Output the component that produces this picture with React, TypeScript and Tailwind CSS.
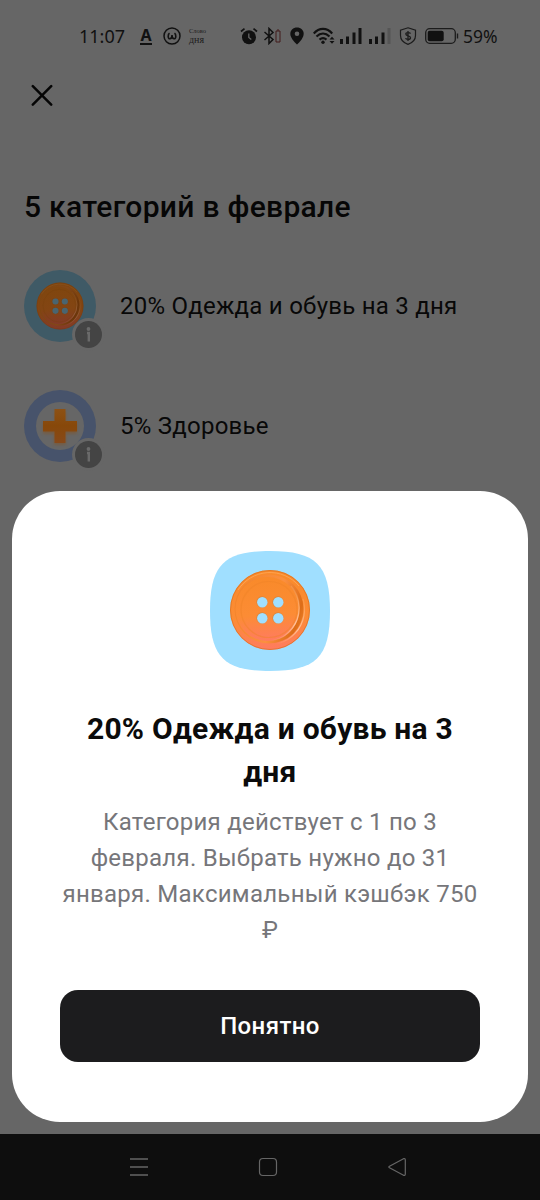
import type { ReactNode } from 'react';

const categories = [
  { title: '20% Одежда и обувь на 3 дня', icon: 'button' },
  { title: '5% Здоровье', icon: 'cross' },
];

function ButtonArt({ id, dim = false, hole }: { id: string; dim?: boolean; hole: string }) {
  return (
    <svg viewBox="0 0 82 82" className="block size-full">
      <defs>
        <linearGradient id={`${id}-face`} x1="0.45" y1="0" x2="0.5" y2="1">
          <stop offset="0" stopColor={dim ? '#80460e' : '#f98a2a'} />
          <stop offset="0.6" stopColor={dim ? '#834513' : '#fc8c35'} />
          <stop offset="1" stopColor={dim ? '#843a28' : '#ff7b60'} />
        </linearGradient>
        <linearGradient id={`${id}-rim`} x1="0" y1="0.3" x2="1" y2="0.6">
          <stop offset="0" stopColor={dim ? '#7c460f' : '#f2842a'} />
          <stop offset="0.6" stopColor={dim ? '#834718' : '#fb9040'} />
          <stop offset="0.93" stopColor={dim ? '#6b3509' : '#dd6d18'} />
          <stop offset="1" stopColor={dim ? '#6f3a0e' : '#e57822'} />
        </linearGradient>
        <linearGradient id={`${id}-shine`} x1="0.6" y1="0" x2="0.4" y2="1">
          <stop offset="0" stopColor={dim ? '#93602f' : '#ffb87c'} stopOpacity="0.3" />
          <stop offset="0.6" stopColor={dim ? '#976548' : '#ffc49c'} />
          <stop offset="1" stopColor={dim ? '#976548' : '#ffc49c'} stopOpacity="0" />
        </linearGradient>
      </defs>
      <circle cx="41" cy="41" r="40" fill={`url(#${id}-face)`} />
      <circle cx="41" cy="41" r="39.5" fill="none" stroke={dim ? '#743b0e' : '#dc711f'} strokeWidth="1" opacity=".7" />
      <path d="M9 21A38 38 0 0 1 70 17" fill="none" stroke={dim ? '#8f5a28' : '#ffac60'} strokeWidth="1" opacity=".7" />
      <circle cx="40" cy="40" r="34.5" fill={`url(#${id}-rim)`} />
      <circle cx="38.500" cy="40" r="32" fill={`url(#${id}-face)`} />
      <path d="M62 17A33.500 33.500 0 0 1 22 69" fill="none" stroke={`url(#${id}-shine)`} strokeWidth="1.3" />
      <path d="M74 30A35.500 35.500 0 0 1 33 75" fill="none" stroke={`url(#${id}-shine)`} strokeWidth="1.2" />
      <circle cx="40" cy="40.500" r="28" fill="none" stroke={dim ? '#75400b' : '#f08428'} strokeWidth="1.200" opacity=".5" />
      {[[33, 33], [49, 33], [33, 49], [49, 49]].map(([x, y]) => (
        <g key={`${x}-${y}`}>
          <circle cx={x} cy={y} r="5.7" fill={dim ? '#75451e' : '#d9853d'} />
          <circle cx={x + 0.3} cy={y + 0.3} r="5.2" fill={hole} />
        </g>
      ))}
    </svg>
  );
}

function CrossArt() {
  return (
    <svg viewBox="0 0 48 48" className="block size-full">
      <defs>
        <linearGradient id="cross" x1="0" y1="0" x2="0" y2="1">
          <stop offset="0" stopColor="#8d5114" />
          <stop offset="0.5" stopColor="#87480a" />
          <stop offset="1" stopColor="#87491a" />
        </linearGradient>
        <filter id="soft" x="-20%" y="-20%" width="140%" height="140%">
          <feGaussianBlur stdDeviation="1.5" />
        </filter>
      </defs>
      <circle cx="24" cy="24" r="24" fill="#666" />
      <path d="M19 9h11v12h11v11H30v11H18V32H7V21h12z" fill="#80542b" filter="url(#soft)" opacity=".6" />
      <path d="M18.500 7h11v12H41v10.500H29.500V41h-11V29.500H7V19h11.500z" fill="url(#cross)" />
    </svg>
  );
}

function Glyph({ w, h, className, children }: { w: number; h: number; className?: string; children: ReactNode }) {
  return (
    <svg width={w} height={h} viewBox={`0 0 ${w} ${h}`} className={`shrink-0 ${className ?? ''}`} fill="none">
      {children}
    </svg>
  );
}

function StatusBar() {
  return (
    <header className="flex h-[72px] items-center pl-[79px] font-['Noto_Sans',sans-serif] text-[#111]">
      <span className="w-[47px] text-[18px] leading-none">11:07</span>
      <span className="ml-[14px] flex w-3 flex-col items-center text-[16px] leading-[14px] font-bold">
        А
        <span className="mt-px h-[2px] w-3 bg-[#111]" />
      </span>
      <Glyph w={18} h={18} className="ml-[11px]">
        <circle cx="9" cy="9" r="8" stroke="#111" strokeWidth="1.5" />
        <path d="M6.500 6.200C4.700 7.500 4.700 11.800 6.900 11.800C8.300 11.800 9 11 9 8C9 11 9.700 11.800 11.100 11.800C13.300 11.800 13.300 7.500 11.500 6.200" stroke="#111" strokeWidth="1.6" />
      </Glyph>
      <span className="ml-[8px] flex w-[18px] flex-col font-['Liberation_Serif',serif] whitespace-nowrap text-[#1c1c1c]">
        <span className="text-[6.5px] leading-[8px]">Слово</span>
        <span className="text-[10px] leading-[10px]">дня</span>
      </span>
      <Glyph w={18} h={18} className="ml-[33px]">
        <circle cx="9" cy="10.200" r="7" fill="#111" />
        <path d="M1 4.500L4.500 1.700M17 4.500L13.500 1.700" stroke="#111" strokeWidth="1.700" />
        <path d="M8.800 6.500v4l2.500 2" stroke="#666" strokeWidth="1.300" />
      </Glyph>
      <Glyph w={18} h={18} className="ml-[5px]">
        <path d="M1.500 5L10 12.500L6 16.500V1.500L10 5.500L1.500 13" stroke="#111" strokeWidth="1.500" />
        <path d="M13 4h4v11h-4zM14 3h2" stroke="#421b1b" strokeWidth="1" />
      </Glyph>
      <Glyph w={14} h={18} className="ml-[9px]">
        <path d="M7 .5C3.200 .5 .3 3.200 .3 6.900C.3 11.500 7 17.500 7 17.500S13.700 11.500 13.700 6.900C13.700 3.200 10.800 .5 7 .5z" fill="#111" />
        <circle cx="7" cy="6.700" r="2.300" fill="#666" />
      </Glyph>
      <Glyph w={22} h={18} className="ml-[9px]">
        <path d="M.8 6.500C6 .3 14 .3 19.200 6.500M3.500 9.600C7.500 5.500 12.500 5.500 16.500 9.600M6.500 12.600C8.800 10.600 11.200 10.600 13.500 12.600" stroke="#111" strokeWidth="2.100" />
        <circle cx="10" cy="15.300" r="1.700" fill="#111" />
        <path d="M16.500 12.500l2.500-2.800 2.500 2.800zM16.500 14l2.500 2.800 2.500-2.800z" fill="#111" />
      </Glyph>
      <Glyph w={22} h={16} className="ml-[5px]">
        <path d="M0 11h3v5H0zM6 8.500h3V16H6zM12.500 4.500h3V16h-3zM18.500 0h3v16h-3z" fill="#111" />
      </Glyph>
      <Glyph w={22} h={16} className="ml-[7px]">
        <path d="M0 11h3v5H0zM6 8.500h3V16H6zM12.500 4.500h3V16h-3z" fill="#111" />
        <path d="M18.500 0h3v16h-3z" fill="#555" />
      </Glyph>
      <Glyph w={18} h={18} className="ml-[8px]">
        <path d="M9 .8L16.500 3.300V8.500C16.500 13 13.500 15.800 9 17.400C4.500 15.800 1.500 13 1.500 8.500V3.300z" stroke="#1c1c1c" strokeWidth="1.200" />
        <path d="M11.500 6.600C11 5.200 6.800 5 6.800 7.100C6.800 9.400 11.500 8.300 11.500 10.700C11.500 12.900 7 12.800 6.600 11.100M9 4v10" stroke="#1c1c1c" strokeWidth="1.300" />
      </Glyph>
      <Glyph w={34} h={16} className="ml-[8px]">
        <rect x=".7" y=".7" width="29.600" height="14.600" rx="4" stroke="#1c1c1c" strokeWidth="1.300" />
        <rect x="2.700" y="2.700" width="16" height="10.600" rx="2" fill="#111" />
        <path d="M32.500 5.500v5" stroke="#1c1c1c" strokeWidth="1.400" />
      </Glyph>
      <span className="mt-[2px] ml-[4px] text-[17.5px] leading-none">59%</span>
    </header>
  );
}

function CategoryIcon({ kind }: { kind: string }) {
  return (
    <div className={`relative flex size-[72px] shrink-0 items-center justify-center rounded-full ${kind === 'button' ? 'bg-[#3f5a66]' : 'bg-[#47536b]'}`}>
      <div className="size-12">
        {kind === 'button' ? <ButtonArt id="small" dim hole="#4a6570" /> : <CrossArt />}
      </div>
      <div className="absolute top-[48px] left-[48px] flex size-[33px] items-center justify-center rounded-full bg-[#666]">
        <svg viewBox="0 0 27 27" className="size-[27px]">
          <circle cx="13.500" cy="13.500" r="13.500" fill="#444" />
          <circle cx="13.500" cy="8" r="1.900" fill="#6a6a6a" />
          <path d="M12 12h1.800v8.500" fill="none" stroke="#6a6a6a" strokeWidth="2.400" />
        </svg>
      </div>
    </div>
  );
}

function NavBar() {
  return (
    <nav className="flex h-[66px] items-center bg-[#0e0e0e] pl-[130px]">
      <svg width="18" height="20" viewBox="0 0 18 20" fill="none" stroke="#666" strokeWidth="1.500">
        <path d="M0 2h18M0 10h18M0 18h18" />
      </svg>
      <svg width="20" height="20" viewBox="0 0 20 20" className="ml-[110px]" fill="none" stroke="#666" strokeWidth="1.200">
        <rect x="1.500" y="1.500" width="17" height="17" rx="3.500" />
      </svg>
      <svg width="20" height="20" viewBox="0 0 20 20" className="ml-[109px]" fill="none" stroke="#666" strokeWidth="1.200">
        <path d="M16.500 1.700L2.500 9.200Q1.200 10 2.500 10.800L16.500 18.300Q18.300 18.800 18.300 17V3Q18.300 1.200 16.500 1.700z" />
      </svg>
    </nav>
  );
}

export default function App() {
  return (
    <div className="flex h-[1200px] w-[540px] flex-col overflow-hidden bg-[#666] font-[Roboto,sans-serif]">
      <div className="relative flex-1">
        <StatusBar />
        <button className="mt-[11px] ml-[30px] flex size-6 items-center justify-center" aria-label="Закрыть">
          <svg width="22" height="22" viewBox="0 0 22 22" stroke="#050505" strokeWidth="2.500" strokeLinecap="round">
            <path d="M1.800 2.200l18.400 18.400M20.200 2.200L1.800 20.600" />
          </svg>
        </button>

        <h1 className="mt-[80px] ml-6 text-[30px] leading-[40px] font-medium tracking-[0.3px] whitespace-nowrap text-[#060606]">
          5 категорий в феврале
        </h1>

        <ul className="mt-[43px] flex flex-col gap-12 px-6">
          {categories.map((c) => (
            <li key={c.title} className="flex items-center gap-6">
              <CategoryIcon kind={c.icon} />
              <span className="text-2xl leading-8 tracking-[0.25px] whitespace-nowrap text-[#080808]">{c.title}</span>
            </li>
          ))}
        </ul>

        {/* Bottom sheet */}
        <section className="absolute inset-x-3 bottom-3 flex h-[631px] flex-col items-center rounded-[48px] bg-white px-12 pt-[60px] text-center">
          <div className="relative size-[120px] shrink-0">
            <svg viewBox="0 0 120 120" className="block size-full">
              <path d="M60 0C106 0 120 14 120 60S106 120 60 120S0 106 0 60S14 0 60 0z" fill="#a0dfff" />
            </svg>
            <div className="absolute top-[18px] left-[19px] size-[82px]">
              <ButtonArt id="large" hole="#a0dfff" />
            </div>
          </div>
          <h2 className="mt-[36px] text-[30px] leading-[43px] font-bold tracking-[0.25px] whitespace-nowrap text-[#0b0b0b]">
            20% Одежда и обувь на 3<br />дня
          </h2>
          <p className="mt-[11px] text-2xl leading-9 tracking-[0.26px] whitespace-nowrap text-[#76767a]">
            Категория действует с 1 по 3<br />
            февраля. Выбрать нужно до 31<br />
            января. Максимальный кэшбэк 750<br />₽
          </p>
          <button className="mt-auto mb-[60px] h-[72px] w-full shrink-0 rounded-[18px] bg-[#1c1c1e] text-2xl font-medium tracking-[0.4px] text-white">
            Понятно
          </button>
        </section>
      </div>
      <NavBar />
    </div>
  );
}
